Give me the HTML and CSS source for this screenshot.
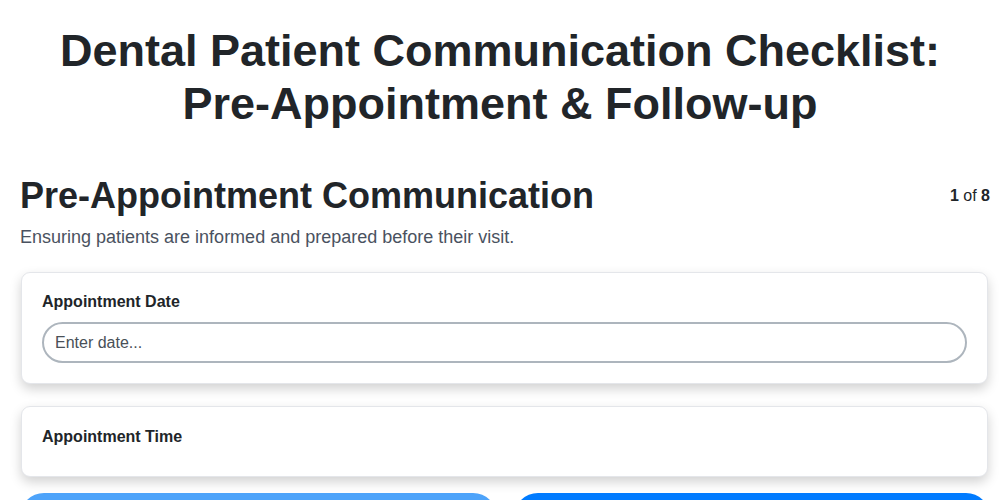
FILE: index.html
```html
<!DOCTYPE html>
<html lang="en">
<head>
<meta charset="utf-8">
<title>Dental Patient Communication Checklist</title>
<link rel="stylesheet" href="styles.css">
</head>
<body>
<main class="page">
  <h1 class="title">Dental Patient Communication Checklist: Pre-Appointment &amp; Follow-up</h1>
  <section class="step">
    <div class="step-head">
      <h2 class="step-title">Pre-Appointment Communication</h2>
      <div class="counter"><b>1</b> of <b>8</b></div>
    </div>
    <p class="step-desc">Ensuring patients are informed and prepared before their visit.</p>
    <div class="card">
      <label class="field-label" for="date">Appointment Date</label>
      <input class="field-input" id="date" type="text" placeholder="Enter date...">
    </div>
    <div class="card card-short">
      <label class="field-label">Appointment Time</label>
    </div>
    <div class="nav">
      <button class="btn btn-prev">Previous</button>
      <button class="btn btn-next">Next</button>
    </div>
  </section>
</main>
</body>
</html>
```

FILE: styles.css
```css
* { box-sizing: border-box; }
html, body { margin: 0; padding: 0; background: #ffffff; }
body {
  font-family: "Liberation Sans", Arial, sans-serif;
  color: #212529;
}
.page {
  padding: 24px 10px 0 20px;
}
.title {
  margin: 0 10px 0 0;
  text-align: center;
  font-size: 45px;
  line-height: 53px;
  font-weight: 700;
  color: #212529;
}
.step { margin-top: 44px; }
.step-head {
  display: flex;
  justify-content: space-between;
  align-items: center;
}
.step-title {
  margin: 0;
  font-size: 36px;
  line-height: 44px;
  font-weight: 700;
  color: #212529;
}
.counter {
  font-size: 16px;
  color: #212529;
}
.counter b { font-weight: 700; }
.step-desc {
  margin: 7px 0 0;
  font-size: 18px;
  line-height: 24px;
  color: #4a5260;
}
.card {
  margin: 23px 2px 0 1px;
  background: #fff;
  border: 1px solid #e4e6ea;
  border-radius: 9px;
  padding: 20px 20px 20px 20px;
  box-shadow: 0 5px 12px rgba(0, 0, 0, 0.18);
}
.field-label {
  display: block;
  font-size: 16px;
  font-weight: 700;
  line-height: 18px;
  color: #212529;
}
.field-input {
  display: block;
  width: 100%;
  height: 41px;
  margin-top: 11px;
  padding: 0 11px;
  border: 2px solid #adb5bd;
  border-radius: 21px;
  font-family: "Liberation Sans", Arial, sans-serif;
  font-size: 16px;
  color: #495057;
  background: #fff;
  outline: none;
}
.field-input::placeholder { color: #495057; }
.card-short {
  margin-top: 22px;
  height: 71px;
  padding-top: 21px;
}
.nav {
  display: flex;
  gap: 17px;
  margin-top: 16px;
}
.btn {
  flex: 1;
  height: 48px;
  border: none;
  border-radius: 24px;
  font-family: "Liberation Sans", Arial, sans-serif;
  font-size: 17px;
  font-weight: 700;
  color: #fff;
}
.btn-prev { background: #4da3fa; }
.btn-next { background: #007bff; }
```
